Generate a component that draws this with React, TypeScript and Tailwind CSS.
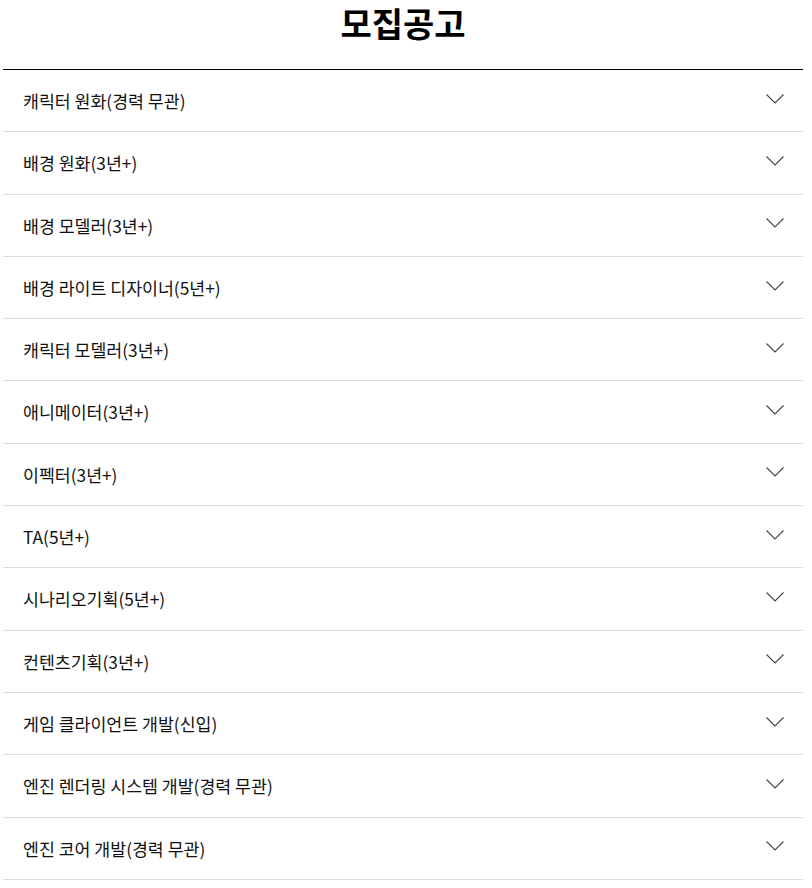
const jobs = [
  '캐릭터 원화(경력 무관)',
  '배경 원화(3년+)',
  '배경 모델러(3년+)',
  '배경 라이트 디자이너(5년+)',
  '캐릭터 모델러(3년+)',
  '애니메이터(3년+)',
  '이펙터(3년+)',
  'TA(5년+)',
  '시나리오기획(5년+)',
  '컨텐츠기획(3년+)',
  '게임 클라이언트 개발(신입)',
  '엔진 렌더링 시스템 개발(경력 무관)',
  '엔진 코어 개발(경력 무관)',
]

function Chevron() {
  return (
    <svg width="18" height="10" viewBox="0 0 18 10" fill="none">
      <polyline points="0.5,0.5 9,9 17.5,0.5" stroke="#444" strokeWidth="1.1" />
    </svg>
  )
}

function App() {
  return (
    <div className="bg-white min-h-screen pl-[3px] font-['Noto_Sans_CJK_KR',sans-serif] text-[#111]">
      <div className="w-[800px]">
        <h1 className="text-center text-[34px] font-bold leading-[46px] h-[69px] text-black">
          모집공고
        </h1>
        <ul className="border-t border-black">
          {jobs.map((job) => (
            <li
              key={job}
              className="flex items-center justify-between h-[62.3px] border-b border-[#dddddd] pl-[20px] pr-[19px]"
            >
              <span className="text-[17.3px] leading-none">{job}</span>
              <span className="-mt-[4px]">
                <Chevron />
              </span>
            </li>
          ))}
        </ul>
      </div>
    </div>
  )
}

export default App
